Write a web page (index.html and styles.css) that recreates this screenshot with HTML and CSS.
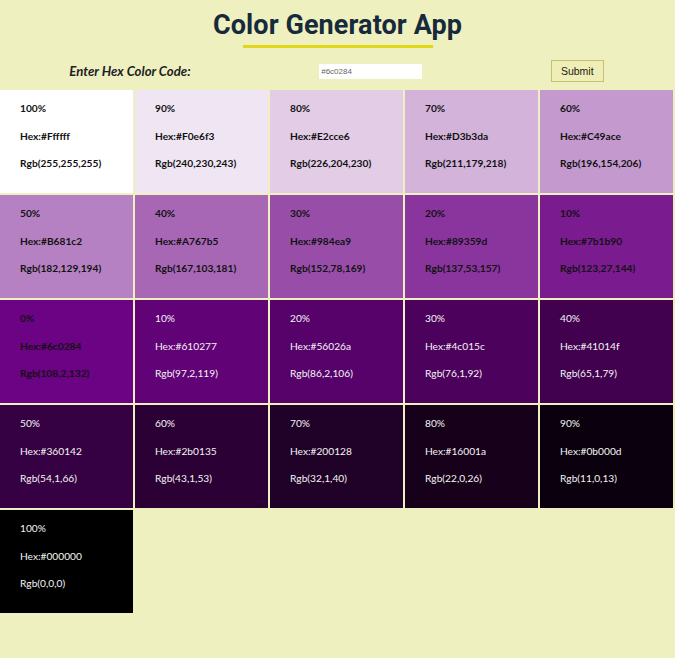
FILE: index.html
```html
<!DOCTYPE html>
<html>
<head>
<meta charset="utf-8">
<link rel="stylesheet" href="styles.css">
</head>
<body>
<header class="header">
  <h1 class="title">Color Generator App</h1>
  <div class="underline"></div>
</header>
<form class="form">
  <label class="label">Enter Hex Color Code:</label>
  <input class="input" type="text" value="#6c0284">
  <button class="btn" type="button">Submit</button>
</form>
<main class="grid">
  <div class="tile tint" style="background:#ffffff"><p>100%</p><p>Hex:#Ffffff</p><p>Rgb(255,255,255)</p></div>
  <div class="tile tint" style="background:#f0e6f3"><p>90%</p><p>Hex:#F0e6f3</p><p>Rgb(240,230,243)</p></div>
  <div class="tile tint" style="background:#e2cce6"><p>80%</p><p>Hex:#E2cce6</p><p>Rgb(226,204,230)</p></div>
  <div class="tile tint" style="background:#d3b3da"><p>70%</p><p>Hex:#D3b3da</p><p>Rgb(211,179,218)</p></div>
  <div class="tile tint" style="background:#c49ace"><p>60%</p><p>Hex:#C49ace</p><p>Rgb(196,154,206)</p></div>
  <div class="tile tint" style="background:#b681c2"><p>50%</p><p>Hex:#B681c2</p><p>Rgb(182,129,194)</p></div>
  <div class="tile tint" style="background:#a767b5"><p>40%</p><p>Hex:#A767b5</p><p>Rgb(167,103,181)</p></div>
  <div class="tile tint" style="background:#984ea9"><p>30%</p><p>Hex:#984ea9</p><p>Rgb(152,78,169)</p></div>
  <div class="tile tint" style="background:#89359d"><p>20%</p><p>Hex:#89359d</p><p>Rgb(137,53,157)</p></div>
  <div class="tile tint" style="background:#7b1b90"><p>10%</p><p>Hex:#7b1b90</p><p>Rgb(123,27,144)</p></div>
  <div class="tile tint" style="background:#6c0284"><p>0%</p><p>Hex:#6c0284</p><p>Rgb(108,2,132)</p></div>
  <div class="tile shade" style="background:#610277"><p>10%</p><p>Hex:#610277</p><p>Rgb(97,2,119)</p></div>
  <div class="tile shade" style="background:#56026a"><p>20%</p><p>Hex:#56026a</p><p>Rgb(86,2,106)</p></div>
  <div class="tile shade" style="background:#4c015c"><p>30%</p><p>Hex:#4c015c</p><p>Rgb(76,1,92)</p></div>
  <div class="tile shade" style="background:#41014f"><p>40%</p><p>Hex:#41014f</p><p>Rgb(65,1,79)</p></div>
  <div class="tile shade" style="background:#360142"><p>50%</p><p>Hex:#360142</p><p>Rgb(54,1,66)</p></div>
  <div class="tile shade" style="background:#2b0135"><p>60%</p><p>Hex:#2b0135</p><p>Rgb(43,1,53)</p></div>
  <div class="tile shade" style="background:#200128"><p>70%</p><p>Hex:#200128</p><p>Rgb(32,1,40)</p></div>
  <div class="tile shade" style="background:#16001a"><p>80%</p><p>Hex:#16001a</p><p>Rgb(22,0,26)</p></div>
  <div class="tile shade" style="background:#0b000d"><p>90%</p><p>Hex:#0b000d</p><p>Rgb(11,0,13)</p></div>
  <div class="tile shade" style="background:#000000"><p>100%</p><p>Hex:#000000</p><p>Rgb(0,0,0)</p></div>
</main>
</body>
</html>
```
FILE: styles.css
```css
* { box-sizing: border-box; }
html, body { margin: 0; padding: 0; }
body {
  background: #eff0c0;
  font-family: "Lato", "Open Sans", sans-serif;
  width: 675px;
}
.header {
  display: flex;
  flex-direction: column;
  align-items: center;
  padding-top: 9px;
}
.title {
  margin: 0;
  font-family: "Roboto", sans-serif;
  font-weight: 700;
  font-size: 27px;
  line-height: 32px;
  letter-spacing: 0.1px;
  color: #162a3b;
}
.underline {
  width: 190px;
  height: 3px;
  background: #e2d81a;
  margin-top: 4px;
}
.form {
  display: flex;
  justify-content: space-around;
  align-items: center;
  height: 38px;
  margin-top: 4px;
  padding-left: 5px;
  padding-right: 5px;
}
.label {
  font-weight: 700;
  font-style: italic;
  font-size: 13.2px;
  color: #1e2226;
}
.input {
  width: 103px;
  height: 15px;
  border: none;
  background: #fff;
  font-family: "Liberation Sans", sans-serif;
  font-size: 8px;
  color: #666;
  padding: 0 2px;
  margin: 0;
  outline: none;
}
.btn {
  width: 53px;
  height: 22px;
  background: #eeeeb6;
  border: 1px solid #c4c270;
  font-family: "Liberation Sans", sans-serif;
  font-size: 10.5px;
  color: #1a1a1a;
  padding: 0;
  margin-right: 2px;
}
.grid {
  display: grid;
  grid-template-columns: repeat(5, 133px);
  grid-auto-rows: 103px;
  gap: 2px;
}
.tile {
  padding: 11px 20px;
  font-size: 10.2px;
}
.tile p {
  margin: 0 0 13.5px 0;
  line-height: 14px;
}
.tint { color: #111; font-weight: 700; }
.shade { color: #f4f4f4; font-weight: 400; }
```
